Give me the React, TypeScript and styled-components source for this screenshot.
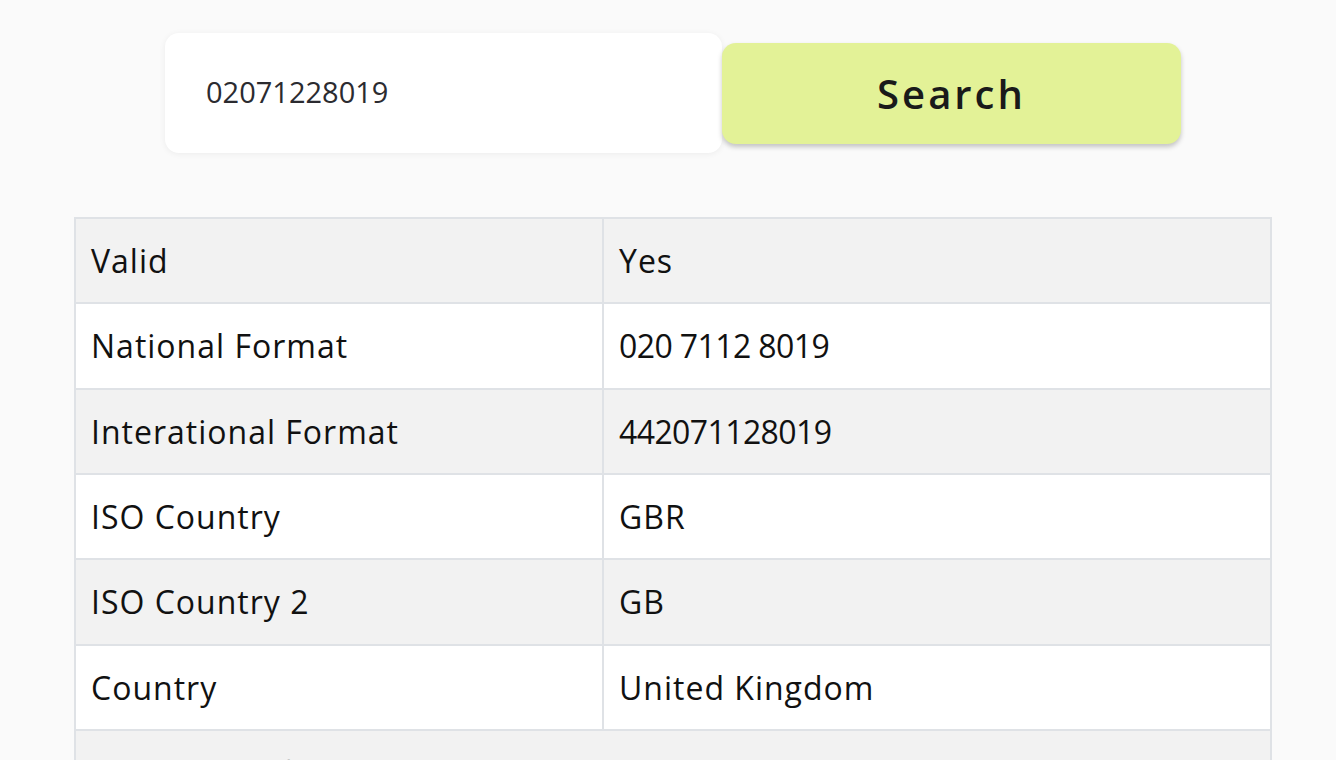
import { useState } from 'react';
import styled, { createGlobalStyle } from 'styled-components';

const GlobalStyle = createGlobalStyle`
  body {
    margin: 0;
    background: #fafafa;
    font-family: 'Open Sans', 'Noto Sans', sans-serif;
    color: #111;
  }
`;

const Page = styled.div`
  padding: 33px 64px 0 74px;
`;

const SearchForm = styled.form`
  display: flex;
  justify-content: center;
  align-items: center;
  margin-bottom: 64px;
`;

const InputField = styled.input`
  box-sizing: border-box;
  width: 557px;
  height: 120px;
  padding: 0 20px 4px 41px;
  border: none;
  border-radius: 14px;
  background: #fff;
  box-shadow: 0 1px 6px rgba(0, 0, 0, 0.06);
  font-family: 'Open Sans', sans-serif;
  font-size: 29px;
  color: #2b2b30;
  outline: none;
`;

const Button = styled.button`
  box-sizing: border-box;
  width: 459px;
  height: 101px;
  border: none;
  border-radius: 14px;
  background: #e3f297;
  box-shadow: 0 3px 5px rgba(0, 0, 0, 0.22);
  font-family: 'Open Sans', sans-serif;
  font-size: 40px;
  font-weight: 600;
  letter-spacing: 3px;
  color: #1a1a1a;
  cursor: pointer;
`;

const Table = styled.table`
  width: 1198px;
  table-layout: fixed;
  border-collapse: collapse;
  font-size: 32px;
  line-height: 48px;
`;

const LabelCol = styled.col`
  width: 528px;
`;

const Row = styled.tr<{ $striped: boolean }>`
  background: ${(p) => (p.$striped ? '#f2f2f2' : '#fff')};
`;

const Cell = styled.td<{ $numeric?: boolean }>`
  height: 48px;
  padding: 18px 14px 17.33px 15px;
  border: 2px solid #dfe2e6;
  vertical-align: middle;
  white-space: nowrap;
  letter-spacing: ${(p) => (p.$numeric ? '-0.6px' : '1px')};
`;

const rows: [string, string][] = [
  ['Valid', 'Yes'],
  ['National Format', '020 7112 8019'],
  ['Interational Format', '442071128019'],
  ['ISO Country', 'GBR'],
  ['ISO Country 2', 'GB'],
  ['Country', 'United Kingdom'],
];

const isNumeric = (v: string) => /^[\d ]+$/.test(v);

export default function App() {
  const [number, setNumber] = useState('02071228019');

  return (
    <>
      <GlobalStyle />
      <Page>
        <SearchForm onSubmit={(e) => e.preventDefault()}>
          <InputField
            type='text'
            value={number}
            onChange={(e) => setNumber(e.target.value)}
          />
          <Button type='submit'>Search</Button>
        </SearchForm>
        <Table>
          <colgroup>
            <LabelCol />
            <col />
          </colgroup>
          <tbody>
            {rows.map(([label, value], i) => (
              <Row key={label} $striped={i % 2 === 0}>
                <Cell>{label}</Cell>
                <Cell $numeric={isNumeric(value)}>{value}</Cell>
              </Row>
            ))}
            <Row $striped>
              <Cell colSpan={2}>Country Prefix</Cell>
            </Row>
          </tbody>
        </Table>
      </Page>
    </>
  );
}
